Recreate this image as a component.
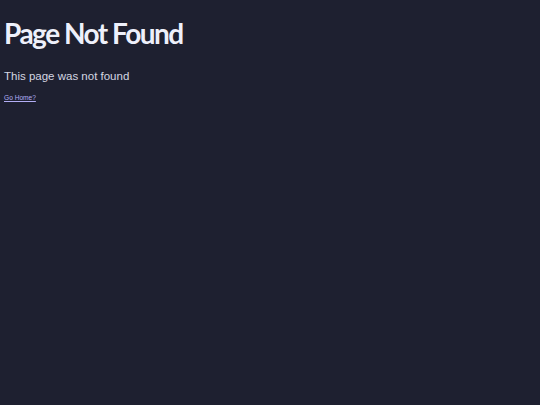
export default function App() {
  return (
    <div className="min-h-screen w-full bg-[#1e2030] px-[4px] pt-[15px]">
      <h1 className="font-['Lato',sans-serif] text-[28px] font-bold leading-[36px] tracking-[-1.5px] text-[#eef0fb]">
        Page Not Found
      </h1>
      <p className="mt-[17px] font-['Liberation_Sans',Arial,sans-serif] text-[11.5px] leading-[16px] text-[#d4d6e2]">
        This page was not found
      </p>
      <a
        href="#"
        className="mt-[9px] block font-['Liberation_Sans',Arial,sans-serif] text-[6.6px] leading-[10px] text-[#b3aef5] underline"
      >
        Go Home?
      </a>
    </div>
  )
}
